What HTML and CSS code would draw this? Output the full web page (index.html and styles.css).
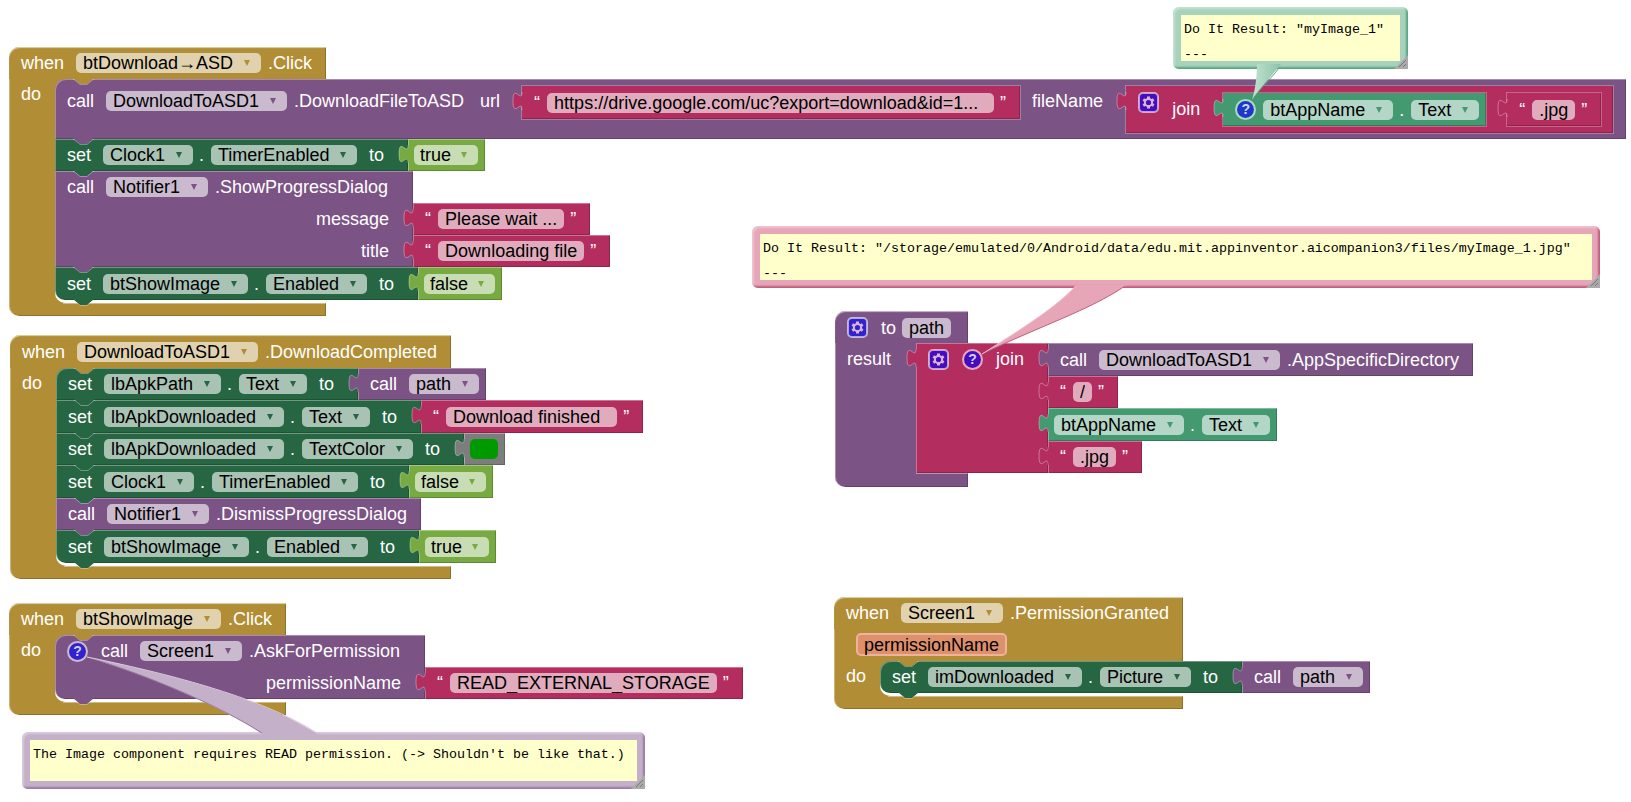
FILE: index.html
```
<!DOCTYPE html>
<html lang="en">
<head>
<meta charset="utf-8">
<title>Blocks</title>
<link rel="stylesheet" href="styles.css">
</head>
<body>
<svg class="defs" aria-hidden="true">
  <symbol id="notch" viewBox="0 0 21 8">
    <path class="fill" d="M0 0H20V1L14 6H7L1 1Z"/>
    <path class="edge" d="M0 1.5H1L7 6.5H14L20 1.5H21"/>
  </symbol>
  <symbol id="tab" viewBox="0 0 11 25">
    <path class="fill" d="M11 24H10C10 12 1 33 1 15C1 -3 10 18 10 6H11Z"/>
    <path class="edge" d="M10 24C10 12 1 33 1 15C1 -3 10 18 10 6"/>
  </symbol>
  <symbol id="gear" viewBox="0 0 21 21">
    <rect class="plate" x="1" y="1" width="19" height="19" rx="4"/>
    <path class="teeth" d="M10.500 4.500V16.500M5.300 7.500L15.700 13.500M15.700 7.500L5.300 13.500"/>
    <circle class="ring" cx="10.500" cy="10.500" r="3.600"/>
  </symbol>
</svg>

<main class="canvas">

  <section class="group g-download">
    <div class="hat gold">
      <header class="bar"><span class="word">when</span><span class="pick"><select aria-label="Component"><option>btDownload→ASD</option></select></span><span class="name">.Click</span></header>
      <div class="body">
        <div class="arm"><span>do</span></div>
        <div class="slot">
          <svg class="notch top"><use href="#notch"/></svg>
          <div class="stmt purple">
            <div class="main inline">
              <span class="word">call</span><span class="pick"><select aria-label="Component"><option>DownloadToASD1</option></select></span><span class="name">.DownloadFileToASD</span>
              <span class="arg">url</span>
              <div class="val inset pink"><svg class="tab"><use href="#tab"/></svg><span class="quote">“</span><input aria-label="Url text" class="text url" value="https://drive.google.com/uc?export=download&amp;id=1..."><span class="quote">”</span></div>
              <span class="arg">fileName</span>
              <div class="val inset pink join"><svg class="tab"><use href="#tab"/></svg>
                <button class="icon violet" aria-label="Edit join"><svg><use href="#gear"/></svg></button><span class="word low">join</span>
                <div class="val inset green"><svg class="tab"><use href="#tab"/></svg><button class="icon round blue first">?</button><span class="pick"><select aria-label="Component"><option>btAppName</option></select></span><span class="dot">.</span><span class="pick"><select aria-label="Property"><option>Text</option></select></span></div>
                <div class="val inset pink"><svg class="tab"><use href="#tab"/></svg><span class="quote">“</span><input aria-label="Text" class="text" size="3" value=".jpg"><span class="quote">”</span></div>
              </div>
            </div>
            <svg class="notch"><use href="#notch"/></svg>
          </div>
          <div class="stmt forest">
            <div class="main"><div class="row"><span class="word">set</span><span class="pick"><select aria-label="Component"><option>Clock1</option></select></span><span class="dot">.</span><span class="pick"><select aria-label="Property"><option>TimerEnabled</option></select></span><span class="to">to</span></div></div>
            <div class="vals"><div class="val lime"><svg class="tab"><use href="#tab"/></svg><span class="pick"><select aria-label="Value"><option>true</option></select></span></div></div>
            <svg class="notch"><use href="#notch"/></svg>
          </div>
          <div class="stmt tall purple">
            <div class="main"><div class="row"><span class="word">call</span><span class="pick"><select aria-label="Component"><option>Notifier1</option></select></span><span class="name ext">.ShowProgressDialog</span></div><div class="row end">message</div><div class="row end">title</div></div>
            <div class="vals"><div class="val pink"><svg class="tab"><use href="#tab"/></svg><span class="quote">“</span><input aria-label="Message" class="text" size="11" value="Please wait ..."><span class="quote">”</span></div><div class="val pink"><svg class="tab"><use href="#tab"/></svg><span class="quote">“</span><input aria-label="Title" class="text" size="13" value="Downloading file"><span class="quote">”</span></div></div>
            <svg class="notch"><use href="#notch"/></svg>
          </div>
          <div class="stmt tall forest">
            <div class="main"><div class="row"><span class="word">set</span><span class="pick"><select aria-label="Component"><option>btShowImage</option></select></span><span class="dot">.</span><span class="pick"><select aria-label="Property"><option>Enabled</option></select></span><span class="to">to</span></div></div>
            <div class="vals"><div class="val lime"><svg class="tab"><use href="#tab"/></svg><span class="pick"><select aria-label="Value"><option>false</option></select></span></div></div>
            <svg class="notch"><use href="#notch"/></svg>
          </div>
        </div>
      </div>
      <div class="foot"></div>
    </div>
  </section>

  <section class="group g-completed">
    <div class="hat gold">
      <header class="bar tall"><span class="word">when</span><span class="pick"><select aria-label="Component"><option>DownloadToASD1</option></select></span><span class="name">.DownloadCompleted</span></header>
      <div class="body">
        <div class="arm"><span>do</span></div>
        <div class="slot even">
          <svg class="notch top"><use href="#notch"/></svg>
          <div class="stmt forest">
            <div class="main"><div class="row"><span class="word">set</span><span class="pick"><select aria-label="Component"><option>lbApkPath</option></select></span><span class="dot">.</span><span class="pick"><select aria-label="Property"><option>Text</option></select></span><span class="to">to</span></div></div>
            <div class="vals"><div class="val purple"><svg class="tab"><use href="#tab"/></svg><span class="word lead">call</span><span class="pick"><select aria-label="Procedure"><option>path</option></select></span></div></div>
            <svg class="notch"><use href="#notch"/></svg>
          </div>
          <div class="stmt forest">
            <div class="main"><div class="row"><span class="word">set</span><span class="pick"><select aria-label="Component"><option>lbApkDownloaded</option></select></span><span class="dot">.</span><span class="pick"><select aria-label="Property"><option>Text</option></select></span><span class="to">to</span></div></div>
            <div class="vals"><div class="val pink"><svg class="tab"><use href="#tab"/></svg><span class="quote">“</span><input aria-label="Text" class="text" size="16" value="Download finished  "><span class="quote">”</span></div></div>
            <svg class="notch"><use href="#notch"/></svg>
          </div>
          <div class="stmt forest">
            <div class="main"><div class="row"><span class="word">set</span><span class="pick"><select aria-label="Component"><option>lbApkDownloaded</option></select></span><span class="dot">.</span><span class="pick"><select aria-label="Property"><option>TextColor</option></select></span><span class="to">to</span></div></div>
            <div class="vals"><div class="val gray"><svg class="tab"><use href="#tab"/></svg><button class="swatch" aria-label="Green"></button></div></div>
            <svg class="notch"><use href="#notch"/></svg>
          </div>
          <div class="stmt forest">
            <div class="main"><div class="row"><span class="word">set</span><span class="pick"><select aria-label="Component"><option>Clock1</option></select></span><span class="dot">.</span><span class="pick"><select aria-label="Property"><option>TimerEnabled</option></select></span><span class="to">to</span></div></div>
            <div class="vals"><div class="val lime"><svg class="tab"><use href="#tab"/></svg><span class="pick"><select aria-label="Value"><option>false</option></select></span></div></div>
            <svg class="notch"><use href="#notch"/></svg>
          </div>
          <div class="stmt purple">
            <div class="main"><div class="row"><span class="word">call</span><span class="pick"><select aria-label="Component"><option>Notifier1</option></select></span><span class="name">.DismissProgressDialog</span></div></div>
            <svg class="notch"><use href="#notch"/></svg>
          </div>
          <div class="stmt forest">
            <div class="main"><div class="row"><span class="word">set</span><span class="pick"><select aria-label="Component"><option>btShowImage</option></select></span><span class="dot">.</span><span class="pick"><select aria-label="Property"><option>Enabled</option></select></span><span class="to">to</span></div></div>
            <div class="vals"><div class="val lime"><svg class="tab"><use href="#tab"/></svg><span class="pick"><select aria-label="Value"><option>true</option></select></span></div></div>
            <svg class="notch"><use href="#notch"/></svg>
          </div>
        </div>
      </div>
      <div class="foot"></div>
    </div>
  </section>

  <section class="group g-show">
    <div class="hat gold">
      <header class="bar"><span class="word">when</span><span class="pick"><select aria-label="Component"><option>btShowImage</option></select></span><span class="name">.Click</span></header>
      <div class="body">
        <div class="arm"><span>do</span></div>
        <div class="slot">
          <svg class="notch top"><use href="#notch"/></svg>
          <div class="stmt purple">
            <div class="main"><div class="row"><button class="icon round indigo">?</button><span class="word">call</span><span class="pick"><select aria-label="Component"><option>Screen1</option></select></span><span class="name ext">.AskForPermission</span></div><div class="row end">permissionName</div></div>
            <div class="vals"><div class="val pink"><svg class="tab"><use href="#tab"/></svg><span class="quote">“</span><input aria-label="Permission name" class="text" size="25" value="READ_EXTERNAL_STORAGE"><span class="quote">”</span></div></div>
            <svg class="notch"><use href="#notch"/></svg>
          </div>
        </div>
      </div>
      <div class="foot"></div>
    </div>
  </section>

  <section class="group g-path">
    <div class="hat purple proc">
      <header class="bar"><button class="icon indigo" aria-label="Edit procedure"><svg><use href="#gear"/></svg></button><span class="word near">to</span><input aria-label="Procedure name" class="text" size="4" value="path"></header>
      <div class="body">
        <div class="arm"><span>result</span></div>
        <div class="result pink">
          <div class="main val-main"><svg class="tab"><use href="#tab"/></svg><div class="row"><button class="icon violet" aria-label="Edit join"><svg><use href="#gear"/></svg></button><button class="icon round violet">?</button><span class="join-word">join</span></div></div>
          <div class="vals even">
            <div class="val purple"><svg class="tab"><use href="#tab"/></svg><span class="word lead">call</span><span class="pick"><select aria-label="Component"><option>DownloadToASD1</option></select></span><span class="name tight">.AppSpecificDirectory</span></div>
            <div class="val pink"><svg class="tab"><use href="#tab"/></svg><span class="quote">“</span><input aria-label="Text" class="text" size="1" value="/"><span class="quote">”</span></div>
            <div class="val green"><svg class="tab"><use href="#tab"/></svg><span class="pick"><select aria-label="Component"><option>btAppName</option></select></span><span class="dot">.</span><span class="pick"><select aria-label="Property"><option>Text</option></select></span></div>
            <div class="val pink"><svg class="tab"><use href="#tab"/></svg><span class="quote">“</span><input aria-label="Text" class="text" size="3" value=".jpg"><span class="quote">”</span></div>
          </div>
        </div>
      </div>
      <div class="foot"></div>
    </div>
  </section>

  <section class="group g-granted">
    <div class="hat gold">
      <header class="bar"><span class="word">when</span><span class="pick"><select aria-label="Component"><option>Screen1</option></select></span><span class="name">.PermissionGranted</span></header>
      <div class="params"><button class="param">permissionName</button></div>
      <div class="body">
        <div class="arm"><span>do</span></div>
        <div class="slot">
          <svg class="notch top"><use href="#notch"/></svg>
          <div class="stmt forest">
            <div class="main"><div class="row"><span class="word">set</span><span class="pick"><select aria-label="Component"><option>imDownloaded</option></select></span><span class="dot">.</span><span class="pick"><select aria-label="Property"><option>Picture</option></select></span><span class="to">to</span></div></div>
            <div class="vals"><div class="val purple"><svg class="tab"><use href="#tab"/></svg><span class="word lead">call</span><span class="pick"><select aria-label="Procedure"><option>path</option></select></span></div></div>
            <svg class="notch"><use href="#notch"/></svg>
          </div>
        </div>
      </div>
      <div class="foot"></div>
    </div>
  </section>

  <div class="bubble b-name">
    <textarea aria-label="Comment" rows="2">Do It Result: "myImage_1"
---</textarea>
    <svg class="grip" viewBox="0 0 14 14"><path d="M0 14L14 0V14Z"/><path class="line" d="M5 12L12 5M9 12L12 9"/></svg>
  </div>
  <div class="bubble b-path">
    <textarea aria-label="Comment" rows="2">Do It Result: "/storage/emulated/0/Android/data/edu.mit.appinventor.aicompanion3/files/myImage_1.jpg"
---</textarea>
    <svg class="grip" viewBox="0 0 14 14"><path d="M0 14L14 0V14Z"/><path class="line" d="M5 12L12 5M9 12L12 9"/></svg>
  </div>
  <div class="bubble b-read">
    <textarea aria-label="Comment" rows="1">The Image component requires READ permission. (-> Shouldn't be like that.)</textarea>
    <svg class="grip" viewBox="0 0 14 14"><path d="M0 14L14 0V14Z"/><path class="line" d="M5 12L12 5M9 12L12 9"/></svg>
  </div>

  <svg class="tails" aria-hidden="true">
    <defs>
      <linearGradient id="t1" x1="0" y1="0" x2="1" y2="0"><stop offset="0" stop-color="#c0e2d0"/><stop offset=".5" stop-color="#a7d3bc"/><stop offset="1" stop-color="#8cc4a8"/></linearGradient>
    </defs>
    <path fill="url(#t1)" d="M1257 64C1257 78 1255 90 1252 100C1262 86 1270 78 1281 64Z"/>
    <path class="shade" stroke="#5aa582" d="M1252 100C1262 86 1270 80 1279 68"/>
    <path fill="#e7a5b8" d="M1076 285C1058 306 1020 330 982 354C1040 326 1090 310 1127 285Z"/>
    <path class="shade" stroke="#c25d7e" d="M982 354C1040 326 1090 310 1125 286"/>
    <path class="shade" stroke="#f2bccb" d="M1076 286C1058 306 1020 330 982 354"/>
    <path fill="#c4b0c9" d="M264 735C220 706 150 676 87 657C160 672 260 696 319 735Z"/>
    <path class="shade" stroke="#9a7ca3" d="M262 733C220 706 150 676 87 657"/>
    <path class="shade" stroke="#d8cadc" d="M87 657C160 672 260 696 317 733"/>
  </svg>
</main>
</body>
</html>
```
FILE: styles.css
```
* { box-sizing: border-box; }

body {
  margin: 0;
  background: #fff;
  font: 18px/20px "Liberation Sans", Arial, sans-serif;
  color: #fff;
}

.defs { position: absolute; width: 0; height: 0; }

.canvas { position: relative; min-height: 100vh; overflow: hidden; }
.group { position: absolute; width: max-content; white-space: nowrap; }
.g-download { left: 9px; top: 47px; }
.g-completed { left: 10px; top: 335px; }
.g-show { left: 9px; top: 603px; }
.g-path { left: 835px; top: 311px; }
.g-granted { left: 834px; top: 597px; }

.gold { --c: #b18e35; }
.purple { --c: #7c5385; }
.forest { --c: #266643; }
.pink { --c: #b32d5e; }
.green { --c: #439970; }
.lime { --c: #77ab41; }
.gray { --c: #7d7d7d; }

/* event and procedure blocks */
.hat { display: flex; flex-direction: column; }
.bar {
  display: flex;
  align-items: center;
  height: 32px;
  padding-left: 12px;
  background: var(--c);
  border-radius: 10px 0 0 0;
  box-shadow: inset 1px 2px 1px -1px #fff9, inset -1px 0 #0003;
}
.bar.tall { height: 33px; }
.body {
  display: flex;
  width: 0;
  min-width: 100%;
  background: linear-gradient(var(--c), var(--c)) 0 0 / 60px 100% no-repeat;
  box-shadow: inset 1px 0 #fff5;
}
.arm { flex: none; width: 46px; padding: 5px 0 0 12px; }
.foot {
  height: 13px;
  background: linear-gradient(#fff6, #fff6) 54px 0 / 100% 1px no-repeat var(--c);
  border-radius: 0 0 0 10px;
  box-shadow: inset 1px 0 #fff5, inset -1px -1px #0003;
}
.slot {
  position: relative;
  flex: none;
  display: flex;
  flex-direction: column;
  align-items: flex-start;
  padding-bottom: 3px;
  border-radius: 0 0 0 10px;
  background: linear-gradient(#fff, #fff) left bottom / 20px 20px no-repeat;
}
.slot.even { display: grid; grid-auto-rows: 32px 33px; align-items: stretch; justify-items: start; }
.slot > .stmt:nth-child(2) > .main { border-top-left-radius: 10px; }
.slot > .stmt:last-child > .main { border-bottom-left-radius: 10px; }

.params { display: flex; height: 32px; padding: 4px 0 0 22px; background: var(--c); box-shadow: inset -1px 0 #0003, inset 1px 0 #fff5; }
.param {
  height: 23px;
  padding: 0 6px;
  border: 2px solid #edb49b;
  border-radius: 5px;
  background: #de8f6c;
  color: #000;
  font: inherit;
}

.proc .bar { padding: 1px 17px 0 12px; }
.proc .arm { width: 81px; padding-top: 6px; }
.proc .body { background-size: 84px 100%; }
.proc .foot { height: 14px; background-position: 81px 0; }
.result { display: flex; flex: none; }

/* statements */
.stmt { position: relative; display: flex; }
.stmt.tall { min-height: 33px; }
.main {
  position: relative;
  display: flex;
  flex-direction: column;
  background: var(--c);
  box-shadow: inset 1px 1px #fff5, inset -1px -1px #0003;
}
.row { display: flex; align-items: center; flex: 1 0 32px; padding-left: 12px; }
.row.end { justify-content: flex-end; padding-right: 24px; }
.val-main .row { flex-grow: 0; }
.vals { display: flex; flex-direction: column; justify-content: flex-end; align-items: flex-start; }
.vals.even { display: grid; grid-auto-rows: 33px 32px; align-items: stretch; justify-items: start; }
.val {
  position: relative;
  display: flex;
  align-items: center;
  flex: 0 0 32px;
  padding: 0 7px 0 6px;
  background: var(--c);
  box-shadow: inset 1px 1px #fff5, inset -1px -1px #0003;
}
.slot.even .val, .tall.forest .val { flex-grow: 1; }

.main.inline { flex-direction: row; align-items: flex-start; padding: 7px 13px 6px 12px; }
.main.inline > span { margin-top: 5px; }
.val.inset { height: 33px; flex: none; outline: 1px solid #fff4; box-shadow: inset -1px -1px #0003; }
.val.join { height: 47px; align-items: flex-start; padding: 7px 12px; }
.join > .icon { margin-top: -1px; }
.join .low { margin: 6px 23px 0 0; }
.join > .val + .val { margin-left: 21px; }
.arg { margin-right: 22px; margin-left: 14px; }
.inline > .arg:last-of-type { margin-left: 12px; margin-right: 23px; }

.notch, .tab { position: absolute; z-index: 2; pointer-events: none; }
.notch { left: 18px; bottom: -7px; width: 21px; height: 8px; }
.notch.top { top: -1px; bottom: auto; z-index: 3; }
.tab { left: -10px; top: 0; width: 11px; height: 25px; }
.fill { fill: var(--c); }
.edge { fill: none; stroke: #fff5; stroke-width: 1; }

/* labels and fields */
.word { margin-right: 12px; }
.word.near { margin-right: 6px; }
.word.lead { margin-left: 6px; }
.name { margin-left: 7px; padding-right: 14px; }
.name.ext { padding-right: 25px; }
.name.tight { padding-right: 7px; }
.join-word { margin-right: 24px; }
.inline > .name { padding-right: 2px; }
.dot { margin: 0 7px 0 6px; }
.to { margin: 0 24px 0 12px; }
.quote { margin: 0 7px 0 6px; }

.pick { position: relative; display: flex; }
.pick::after {
  content: "";
  position: absolute;
  right: 11px;
  top: 7px;
  border: solid transparent;
  border-width: 6px 3px 0;
  border-top-color: var(--c);
  pointer-events: none;
}
.pick select, .text {
  height: 20px;
  margin: 0;
  border: 0;
  border-radius: 5px;
  background: #fff9;
  color: #000;
  font: inherit;
}
.pick select { appearance: none; padding: 0 27px 0 7px; }
.lime .pick select { padding: 0 26px 0 6px; }
.text { padding: 0 7px; field-sizing: content; }
.text.url { width: 447px; }

.icon {
  flex: none;
  width: 21px;
  height: 21px;
  margin: 0 13px 0 0;
  padding: 0;
  border: 0;
  border-radius: 5px;
  background: none;
  color: #fffc;
  font: bold 14px/17px "Liberation Sans", Arial, sans-serif;
}
.icon svg { display: block; width: 21px; height: 21px; }
.plate { fill: var(--i); stroke: #fff9; stroke-width: 2; }
.teeth { stroke: #dcb4d4; stroke-width: 3; fill: none; }
.ring { fill: var(--i); stroke: #dcb4d4; stroke-width: 2; }
.icon.round { border: 2px solid #fff9; border-radius: 50%; background: var(--i) padding-box; }
.icon.first { margin: 0 7px 0 6px; }
.violet { --i: #440ec0; }
.indigo { --i: #3122cf; }
.blue { --i: #1d39cb; }
.swatch { width: 28px; height: 20px; padding: 0; border: 0; border-radius: 5px; background: #009900; }

/* comment bubbles */
.bubble {
  position: absolute;
  z-index: 4;
  padding: 8px;
  border-radius: 6px;
  background: var(--b);
  box-shadow: inset 2px 2px 2px #fff5, inset -2px -2px 2px var(--d);
}
.bubble textarea {
  display: block;
  width: 100%;
  height: 46px;
  padding: 2px 3px 0;
  border: 0;
  resize: none;
  overflow: hidden;
  background: #ffffcc;
  color: #000;
  font: 10pt/25px "Liberation Mono", "Courier New", monospace;
}
.b-name { left: 1173px; top: 7px; width: 235px; --b: #a7d3bc; --d: #5aa582; }
.b-path { left: 752px; top: 226px; width: 848px; --b: #e7a5b8; --d: #c25d7e; }
.b-read { left: 22px; top: 732px; width: 623px; --b: #c4b0c9; --d: #9a7ca3; }
.b-read textarea { height: 41px; }
.grip { position: absolute; right: 0; bottom: 0; width: 14px; height: 14px; fill: #aaa; }
.grip .line { stroke: #777; stroke-width: 1; }

.tails { position: absolute; inset: 0; z-index: 5; width: 100%; height: 100%; pointer-events: none; }
.shade { fill: none; stroke-width: 1; }
```
